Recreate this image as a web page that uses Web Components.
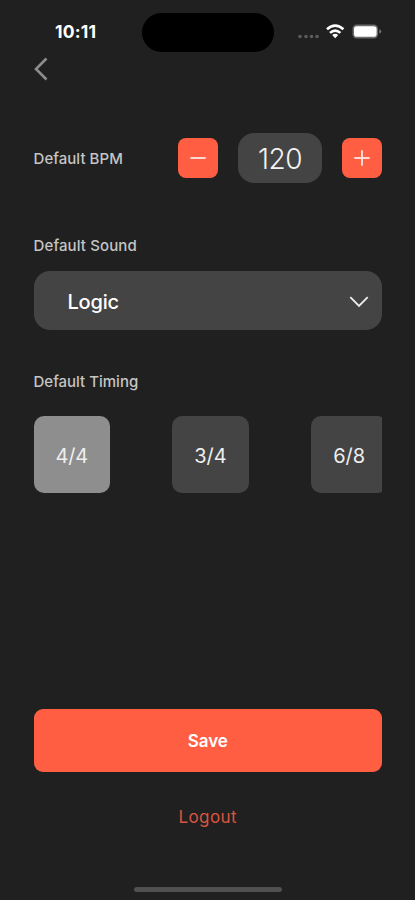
<!DOCTYPE html>
<html lang="en">
<head>
<meta charset="utf-8">
<title>Metronome settings</title>
<style>
html,body{margin:0;background:#202020}
</style>
</head>
<body>
<settings-screen></settings-screen>
<script>
const define = (name, html) => {
  const t = document.createElement('template');
  t.innerHTML = html;
  customElements.define(name, class extends HTMLElement {
    constructor() {
      super();
      this.attachShadow({mode: 'open'}).append(t.content.cloneNode(true));
    }
  });
};

define('status-bar', `
<style>
:host{display:flex;box-sizing:border-box;height:52px;padding-top:12px;align-items:center;color:#fff}
time{box-sizing:border-box;width:142px;padding-left:55px;font:650 17.5px/22px Inter,sans-serif;letter-spacing:.2px}
.island{width:132px;height:39px;border-radius:20px;background:#000}
svg{display:block;margin-left:22px}
</style>
<time>10:11</time><div class="island"></div>
<svg width="90" height="20" viewBox="296 22 90 20" fill="none">
<g fill="#5c5c5c"><circle cx="300" cy="36.5" r="1.8"/><circle cx="306" cy="36.5" r="1.8"/><circle cx="311.5" cy="36.5" r="1.8"/><circle cx="317" cy="36.5" r="1.8"/></g>
<path d="M327 29.3Q335.2 21.8 343.4 29.3M330 32.9Q335.2 28.2 340.4 32.9" stroke="#fff" stroke-width="2.6"/>
<path d="M332.2 35.1Q335.2 32.6 338.2 35.1L335.2 38.2Z" fill="#fff"/>
<rect x="352.5" y="24.6" width="25.5" height="13.8" rx="4.2" fill="#6a6a6a"/>
<rect x="354" y="26.3" width="22.6" height="10.4" rx="2.8" fill="#fff"/>
<path d="M379.3 29.3Q381.3 30 381.3 31.5T379.3 33.7Z" fill="#777"/>
</svg>`);

define('back-button', `
<style>:host{display:block;height:24px}svg{display:block}</style>
<svg width="16" height="24" viewBox="0 0 16 24" fill="none"><path d="M12.5 1.5 2 12 12.5 22.5" stroke="#8d8d8d" stroke-width="2.6"/></svg>`);

define('field-label', `
<style>:host{display:block;color:#c5c5c5;font:500 15px/20px Inter,sans-serif;letter-spacing:var(--track,0);white-space:nowrap}span{display:block;padding-top:1px;height:19px}</style><span><slot></slot></span>`);

define('step-button', `
<style>:host{display:grid;place-items:center;width:40px;height:40.5px;border-radius:8px;background:#ff5e43}
svg{grid-area:1/1}.v{display:none}:host([plus]) .v{display:inline}</style>
<svg width="18" height="18" viewBox="0 0 18 18" stroke="#ffe9e4" stroke-width="1.8"><path d="M1.3 9h15.4"/><path class="v" d="M9 1.3v15.4"/></svg>`);

define('bpm-value', `
<style>:host{display:grid;place-items:center;width:83.5px;height:50px;border-radius:16px;background:#444;color:#f2f2f2;font:350 28px/34px Inter,sans-serif;letter-spacing:-.5px}span{padding-top:2px}</style><span><slot></slot></span>`);

define('sound-select', `
<style>:host{display:flex;box-sizing:border-box;height:59px;padding:2px 13px 0 34px;align-items:center;justify-content:space-between;border-radius:16px;background:#444;color:#fff;font:500 20px/26px Inter,sans-serif;letter-spacing:-.2px}span{padding-top:1px}</style>
<span><slot></slot></span><svg width="20" height="12" viewBox="0 0 20 12" fill="none"><path d="M1.3 1.2 10 10 18.7 1.2" stroke="#eee" stroke-width="1.8"/></svg>`);

define('timing-tile', `
<style>:host{display:grid;place-items:center;flex:none;width:76.5px;height:77px;border-radius:10px;background:#444;color:#eee;font:400 20px/26px Inter,sans-serif;letter-spacing:-.1px}
:host([selected]){background:#8e8e8e}span{padding-top:2px}</style><span><slot></slot></span>`);

define('action-button', `
<style>:host{display:grid;place-items:center;height:63px;border-radius:9px;background:#ff5e43;color:#fff;font:600 17px/22px Inter,sans-serif;letter-spacing:-.1px}span{padding-top:1px}
:host([quiet]){height:26px;background:none;color:#d9553f;font-weight:400;letter-spacing:.4px}</style><span><slot></slot></span>`);

define('settings-screen', `
<style>
:host{display:flex;flex-direction:column;box-sizing:border-box;width:415px;height:900px;background:#202020;overflow:hidden}
main{display:flex;flex-direction:column;padding:0 33px 0 33.5px;flex:1}
back-button{margin-top:5px}
.bpm{display:flex;align-items:center;margin-top:52px;height:50px}
.bpm field-label{width:144.5px;--track:.05px}
.bpm bpm-value{margin:0 20.2px}
.sound{margin-top:52px;--track:.12px}
sound-select{margin-top:16px}
.timing{margin-top:41px;--track:0px}
.tiles{display:flex;gap:62.2px;overflow:hidden;margin-top:25px}
.save{margin-top:216px}
.logout{margin-top:31px}
.home{align-self:center;width:148px;height:5px;border-radius:3px;background:#505050;margin-bottom:8px}
</style>
<status-bar></status-bar>
<main>
<back-button></back-button>
<div class="bpm"><field-label>Default BPM</field-label><step-button></step-button><bpm-value>120</bpm-value><step-button plus></step-button></div>
<field-label class="sound">Default Sound</field-label>
<sound-select>Logic</sound-select>
<field-label class="timing">Default Timing</field-label>
<div class="tiles"><timing-tile selected>4/4</timing-tile><timing-tile>3/4</timing-tile><timing-tile>6/8</timing-tile></div>
<action-button class="save">Save</action-button>
<action-button class="logout" quiet>Logout</action-button>
</main>
<div class="home"></div>`);
</script>
</body>
</html>
